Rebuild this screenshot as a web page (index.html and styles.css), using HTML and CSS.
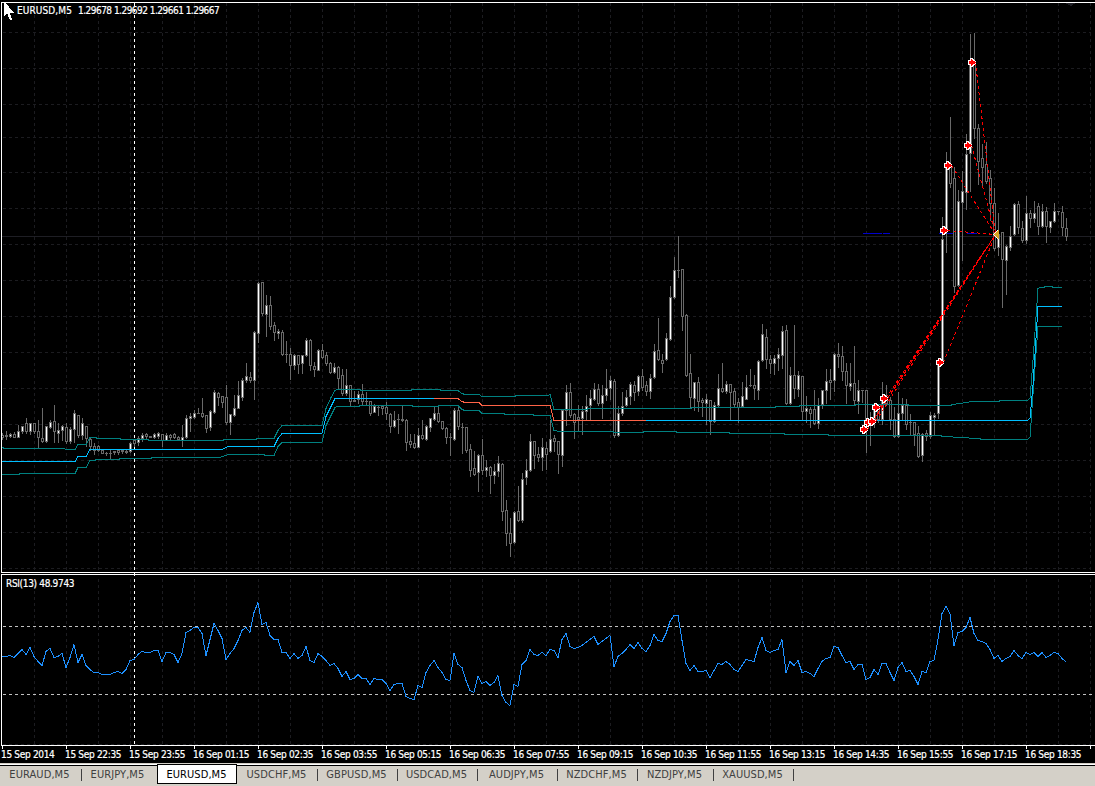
FILE: index.html
```html
<!DOCTYPE HTML>
<html>
	<head>
		<title>EURUSD,M5</title>
		<meta charset="utf-8">
		<link rel="stylesheet" href="styles.css">
	</head>

	<body>
		<div id="terminal">
			<div class="pane price">
				<svg id="price_chart" width="1095" height="573" viewBox="0 0 1095 573"></svg>
				<div class="pane_title price_title"><span class="symbol">EURUSD,M5</span><span>1.29678 1.29692 1.29661 1.29667</span></div>
				<svg class="cursor" width="12" height="20" viewBox="0 0 12 20"><path d="M0 0V15L3 12L6 19H8V18L6 12H10Z" fill="#fff" /></svg>
			</div>
			<div class="pane rsi">
				<svg id="rsi_chart" width="1095" height="176" viewBox="0 573 1095 176"></svg>
				<div class="pane_title rsi_title">RSI(13) 48.9743</div>
			</div>
			<div id="time_axis"></div>
			<div id="tabs">
				<a class="tab first">EURAUD,M5</a>
				<a class="tab before_active">EURJPY,M5</a>
				<a class="tab active">EURUSD,M5</a>
				<a class="tab">USDCHF,M5</a>
				<a class="tab">GBPUSD,M5</a>
				<a class="tab">USDCAD,M5</a>
				<a class="tab">AUDJPY,M5</a>
				<a class="tab">NZDCHF,M5</a>
				<a class="tab narrow">NZDJPY,M5</a>
				<a class="tab">XAUUSD,M5</a>
			</div>
		</div>
		<script src="chart.js"></script>
	</body>
</html>
```

FILE: styles.css
```css
html, body {
	margin: 0px;
	padding: 0px;
	width: 100%;
	height: 100%;
	overflow: hidden;
	background-color: #000;
}

#terminal {
	display: flex;
	flex-direction: column;
	height: 786px;
	font-family: "DejaVu Sans Condensed", "DejaVu Sans", sans-serif;
	font-size: 10px;
	color: #FFF;
}

.pane {
	position: relative;
	flex: none;
}

.price {
	height: 573px;
}

.rsi {
	height: 176px;
}

.pane svg {
	display: block;
	shape-rendering: crispEdges;
}

.pane_title {
	position: absolute;
	line-height: 14px;
	white-space: nowrap;
	-webkit-text-stroke: 0.2px #FFF;
}

.price_title {
	display: flex;
	gap: 6px;
	top: 4px;
	left: 17px;
	letter-spacing: -0.52px;
}

.symbol {
	letter-spacing: 0.1px;
}

.rsi_title {
	top: 4px;
	left: 6px;
	letter-spacing: -0.33px;
}

.pane .cursor {
	position: absolute;
	top: 1px;
	left: 4px;
}

#time_axis {
	display: flex;
	flex: none;
	height: 14px;
	padding-left: 1px;
	overflow: hidden;
	letter-spacing: -0.32px;
	-webkit-text-stroke: 0.2px #FFF;
}

#time_axis span {
	flex: none;
	width: 64px;
	line-height: 12px;
	white-space: nowrap;
}

#tabs {
	display: flex;
	flex: 1;
	border-top: 1px solid #D4D0C8;
	background-color: #D4D0C8;
	box-shadow: inset 0 1px 0 #FFF, inset 0 2px 0 #000;
	color: #404040;
	font-size: 11px;
}

.tab {
	position: relative;
	box-sizing: border-box;
	width: 80px;
	height: 20px;
	padding-top: 3px;
	padding-right: 3px;
	line-height: 16px;
	letter-spacing: 0.08px;
	text-align: center;
}

.tab::after {
	content: "";
	position: absolute;
	top: 5px;
	right: 0;
	width: 1px;
	height: 12px;
	background-color: #404040;
}

.tab.first {
	width: 82px;
}

.tab.before_active {
	width: 75px;
	padding-right: 4px;
}

.tab.narrow {
	width: 76px;
}

.tab.active {
	width: 80px;
	margin-right: 1px;
	padding-top: 2px;
	padding-right: 1px;
	border: 1px solid #000;
	background-color: #FFF;
	color: #000;
}

.tab.before_active::after, .tab.active::after {
	display: none;
}
```

FILE: chart.js
```js
var NS = "http://www.w3.org/2000/svg";
var STEP = 4;
var FIRST = 2;

//high, body top, body bottom, low, 1 = bullish
var candles = [
	[433,435,437,439,0],[431,435,436,439,0],[433,434,436,437,1],[432,434,437,437,0],[425,431,437,437,1],
	[426,426,431,433,1],[418,423,431,433,0],[423,423,431,434,1],[423,423,431,433,0],[420,431,437,448,0],
	[408,438,441,442,0],[426,426,441,442,1],[420,422,427,428,1],[405,421,431,442,0],[423,430,433,442,1],
	[425,426,430,440,1],[423,427,441,443,0],[427,429,441,443,1],[410,413,429,442,1],[415,415,435,437,0],
	[418,423,435,439,1],[426,426,438,446,0],[438,439,446,450,0],[443,446,450,454,0],[445,446,450,451,0],
	[449,450,453,453,0],[452,453,453,455,0],[450,453,453,459,0],[451,451,452,454,0],[450,450,452,454,0],
	[450,450,451,453,0],[450,451,452,453,0],[442,443,451,452,1],[439,440,443,446,0],[436,438,442,445,1],
	[433,435,438,441,1],[433,434,436,438,0],[436,436,437,437,0],[433,434,437,438,1],[432,433,436,438,1],
	[434,434,440,446,0],[433,435,440,440,1],[434,435,437,439,0],[433,434,437,438,0],[436,437,439,440,0],
	[425,437,440,446,1],[415,418,437,438,1],[413,416,418,431,1],[410,413,417,418,1],[408,413,413,413,0],
	[398,413,416,417,0],[415,415,428,432,0],[410,411,427,430,1],[390,392,412,413,1],[392,393,397,405,0],
	[396,396,402,407,0],[385,397,422,424,0],[414,414,422,434,1],[395,408,415,416,1],[381,395,408,408,1],
	[378,380,397,400,1],[363,376,380,382,1],[372,377,380,382,0],[331,332,380,399,1],[282,283,333,342,1],
	[282,282,313,315,0],[295,305,314,336,1],[296,305,326,329,0],[322,325,332,340,0],[329,331,333,338,1],
	[330,332,354,355,0],[341,354,354,362,0],[348,354,365,379,0],[354,355,365,369,1],[355,355,364,373,0],
	[355,355,363,373,1],[338,340,355,356,1],[339,340,365,370,0],[362,366,369,376,0],[349,350,370,370,1],
	[344,350,357,358,0],[352,355,363,365,0],[362,363,372,373,0],[363,367,372,373,1],[366,367,378,389,0],
	[369,375,393,395,0],[369,385,393,395,1],[385,385,401,405,0],[391,400,401,401,0],[391,394,399,403,1],
	[384,394,401,404,0],[392,401,401,405,0],[401,401,413,415,0],[404,406,412,412,1],[406,407,407,415,0],
	[405,406,408,414,0],[402,407,413,419,0],[413,414,426,432,0],[411,420,426,427,1],[414,419,419,433,0],
	[405,419,420,421,0],[419,420,442,450,0],[434,441,444,447,0],[434,443,447,448,0],[428,435,447,447,1],
	[420,435,438,439,0],[425,426,439,440,1],[418,418,427,431,1],[406,413,419,420,1],[405,413,421,422,0],
	[421,421,428,429,0],[427,428,437,443,0],[433,437,437,455,0],[408,410,439,440,1],[406,410,426,429,0],
	[423,427,427,453,0],[427,427,450,452,0],[444,449,470,476,0],[451,468,474,475,0],[454,455,472,491,1],
	[439,455,470,474,0],[460,467,470,476,1],[466,467,475,493,0],[464,471,475,483,1],[456,463,471,476,1],
	[463,464,511,520,0],[500,510,533,545,0],[518,533,543,556,0],[511,512,542,543,1],[486,511,520,521,0],
	[473,479,520,522,1],[459,470,477,484,1],[434,441,470,471,1],[441,441,455,468,0],[447,454,457,461,0],
	[438,447,457,470,1],[442,448,454,469,0],[420,439,451,452,1],[435,438,441,451,0],[441,441,454,473,0],
	[409,410,455,466,1],[385,392,410,425,1],[383,392,415,417,0],[413,414,422,438,0],[405,417,419,430,0],
	[406,411,418,434,1],[395,406,411,419,1],[390,398,405,419,1],[383,389,399,400,1],[384,389,403,405,0],
	[385,395,403,418,1],[369,388,395,400,1],[376,380,388,399,1],[379,381,435,437,0],[406,413,435,436,1],
	[392,406,413,415,1],[390,397,405,406,1],[382,384,396,404,1],[381,385,392,400,0],[375,376,391,395,1],
	[369,376,387,390,0],[381,385,391,395,0],[374,378,391,398,1],[344,351,377,378,1],[318,350,359,360,0],
	[354,360,363,372,0],[333,338,359,360,1],[286,297,339,340,1],[257,270,297,298,1],[236,270,270,277,0],
	[269,269,316,330,0],[314,315,375,376,0],[354,373,397,407,0],[382,382,398,410,1],[377,382,401,411,0],
	[398,400,402,416,0],[394,399,403,424,1],[400,400,421,434,0],[402,405,421,422,1],[374,388,405,406,1],
	[363,388,391,392,0],[381,384,391,393,1],[384,384,392,419,0],[388,391,404,407,0],[398,402,407,422,0],
	[382,396,406,407,1],[375,387,399,399,1],[369,385,385,386,0],[375,385,388,399,0],[360,361,390,399,1],
	[324,334,360,361,1],[329,337,359,368,0],[355,359,363,373,0],[355,358,363,374,1],[348,354,358,370,1],
	[326,331,355,368,1],[325,330,403,404,0],[367,375,403,404,1],[325,375,388,398,0],[371,375,389,396,1],
	[376,376,411,420,0],[396,408,411,422,1],[407,409,413,427,0],[390,409,423,424,0],[398,405,423,428,1],
	[390,390,404,408,1],[369,381,390,403,1],[369,380,382,399,0],[353,354,380,391,1],[343,354,356,367,0],
	[346,356,371,380,0],[363,371,385,403,0],[363,383,386,390,1],[346,383,400,405,0],[380,390,401,413,1],
	[390,390,390,402,0],[390,390,422,452,0],[412,419,423,445,1],[403,408,422,427,1],[404,407,419,422,0],
	[382,398,419,424,1],[385,398,403,405,0],[397,400,419,429,0],[407,419,436,437,0],[392,413,436,437,1],
	[398,405,413,419,1],[399,405,424,429,0],[414,422,422,435,0],[422,422,434,445,0],[426,433,456,457,0],
	[433,434,455,461,1],[430,433,436,440,0],[412,415,436,438,1],[413,415,417,435,1],[362,364,413,418,1],
	[217,239,361,363,1],[152,165,229,252,1],[117,165,183,187,0],[167,178,286,292,0],[190,201,285,286,1],
	[171,191,202,260,1],[134,154,192,209,1],[34,62,153,191,1],[33,63,128,138,0],[124,128,161,184,0],
	[144,158,167,185,0],[142,164,181,183,0],[170,178,203,220,0],[188,203,248,250,0],[213,234,247,255,1],
	[232,232,259,307,0],[245,246,260,294,1],[226,236,247,250,1],[203,204,234,235,1],[201,204,227,233,0],
	[221,228,240,242,0],[196,213,240,243,1],[210,213,218,227,0],[201,213,218,222,1],[203,206,226,234,0],
	[204,211,226,227,1],[207,211,226,242,0],[221,221,227,232,1],[203,211,221,222,1],[211,211,211,214,0],
	[206,212,227,235,0],[218,228,236,240,0]
];

var rsi = [
	656,656,655,657,653,649,654,647,656,661,665,651,648,657,656,653,667,657,644,662,654,665,669,672,672,674,
	674,674,672,671,673,669,660,659,654,651,652,652,650,650,661,652,652,654,662,653,632,630,627,627,633,655,
	639,623,630,638,659,653,648,640,630,627,632,612,602,624,622,635,639,639,652,652,658,653,658,655,646,660,
	662,653,656,660,665,663,668,676,671,679,678,674,678,678,684,678,679,679,683,690,684,683,683,696,698,699,
	685,687,672,665,660,667,672,679,680,653,664,667,680,690,692,676,683,681,685,682,675,695,702,705,684,686,
	664,660,649,654,655,652,655,649,650,657,639,633,646,648,647,645,642,639,636,644,641,638,635,666,656,653,
	649,644,648,642,648,651,645,634,640,641,633,621,615,615,640,663,670,665,671,671,670,677,670,663,664,661,
	664,669,671,665,659,660,661,647,637,650,652,650,649,639,672,661,665,660,672,671,673,676,668,661,658,657,
	646,647,655,662,661,669,664,664,679,677,669,674,663,663,672,680,667,662,671,670,676,684,671,672,661,660,
	639,613,606,613,645,632,631,627,617,633,640,641,643,649,658,655,661,658,656,650,655,658,652,654,652,656,
	652,657,655,652,653,658,661
];

//Indicator bands
var upper = "2,447 5,448 64,448 66,449 75,449 78,444 86,444 90,437 96,437 97,438 120,438 121,439 148,439 149,440 221,440 226,439 256,439 257,438 274,438 278,430 282,425 322,425 326,408 331,397 335,390 337,389 360,389 361,390 411,390 412,389 440,389 441,390 458,390 462,393 465,394 479,394 482,396 515,396 516,395 548,395 550,394 554,409 587,409 588,408 691,408 692,407 775,407 776,406 799,406 800,405 855,405 856,404 908,404 909,405 950,405 953,404 960,403 972,401 999,401 1000,400 1027,400 1030,398 1033,360 1038,288 1040,287 1044,287 1045,286 1052,286 1053,287 1062,287";
var lower = "2,474 19,474 20,473 75,473 78,467 86,467 90,460 95,460 96,459 119,459 120,458 151,458 152,457 220,457 228,454 264,454 265,455 274,455 278,446 282,442 322,442 326,425 331,415 335,407 337,406 359,406 360,405 412,405 413,406 438,406 439,405 458,405 462,409 465,410 479,410 482,413 504,413 505,414 533,414 534,415 550,415 554,430 560,431 613,431 614,432 643,432 644,431 676,431 677,432 729,432 730,433 784,433 785,434 828,434 829,435 940,435 943,436 952,436 954,437 968,437 970,438 980,438 981,439 1027,439 1030,437 1033,394 1038,326 1062,326";
var middle = [
	["#00bfff", "2,461 75,461 78,456 86,456 90,449 222,449 228,446 274,446 278,438 282,433 322,433 326,416 331,406 335,398 434,398"],
	["#ff6347", "434,398 458,398 462,401 465,402 479,402 482,405 550,405 554,420 646,420"],
	["#00bfff", "646,420 1027,420 1030,418 1033,385 1038,306 1062,306"]
];

//Sell orders, all closed at the same point
var orders = [[863,429],[867,422],[871,421],[875,407],[883,398],[939,362],[943,230],[947,165],[967,145],[971,62]];
var close_point = [995, 234];

function add(parent, tag, attrs) {
	var el = document.createElementNS(NS, tag);
	for (var key in attrs) { el.setAttribute(key, attrs[key]); }
	parent.appendChild(el);
	return el;
}

function rect(parent, x, y, w, h, fill) {
	return add(parent, "rect", { x: x, y: y, width: w, height: h, fill: fill });
}

function line(parent, x1, y1, x2, y2, color, dash) {
	var attrs = { x1: x1, y1: y1, x2: x2, y2: y2, stroke: color };
	if (dash) { attrs["stroke-dasharray"] = dash; }
	return add(parent, "line", attrs);
}

function poly(parent, points, color) {
	return add(parent, "polyline", { points: points, stroke: color, fill: "none", transform: "translate(0 0.5)" });
}

function drawGrid(svg, top, bottom, rows) {
	for (var x = 34; x < 1095; x += 32) {
		line(svg, x + 0.5, top, x + 0.5, bottom, "#1c1c20", "3 3");
	}
	rows.forEach(function(y) {
		line(svg, 3, y + 0.5, 1091, y + 0.5, "#1c1c20", "3 3");
	});
}

function drawCandle(svg, x, c) {
	var gray = "#696969";
	rect(svg, x, c[0], 1, c[3] - c[0] + 1, gray);
	rect(svg, x - 1, c[1], 3, c[2] - c[1] + 1, gray);
	if (c[2] - c[1] > 1) {
		rect(svg, x, c[1] + 1, 1, c[2] - c[1] - 1, c[4] ? "#fff" : "#000");
	}
}

function drawPrice() {
	var svg = document.getElementById("price_chart");
	drawGrid(svg, 3, 572, [32,68,104,137,172,208,244,280,316,352,388,424,460,496,532,568]);
	line(svg, 134.5, 3, 134.5, 572, "#fff", "3 3");
	rect(svg, 2, 236, 1093, 1, "#1e1e24");
	rect(svg, 863, 233, 19, 1, "#0000cd");
	rect(svg, 883, 233, 7, 1, "#0000cd");
	rect(svg, 939, 233, 15, 1, "#0000cd");
	rect(svg, 967, 233, 10, 1, "#0000cd");

	candles.forEach(function(c, i) { drawCandle(svg, FIRST + i * STEP, c); });

	poly(svg, upper, "#008080");
	poly(svg, lower, "#008080");
	middle.forEach(function(m) { poly(svg, m[1], m[0]); });

	orders.forEach(function(o) {
		line(svg, o[0] + 4.5, o[1] + 0.5, close_point[0] + 0.5, close_point[1] + 0.5, "#f00", "3 3");
	});
	orders.forEach(function(o) {
		var g = add(svg, "g", { transform: "translate(" + o[0] + " " + o[1] + ")" });
		add(g, "path", { d: "M-3 -2H-1V-4H1L4.5 -0.5V1.5L1 5H-1V3H-3Z", fill: "#fff" });
		add(g, "path", { d: "M-2 -1H0V-3L4.5 0V1L0 4V2H-2Z", fill: "#f00" });
	});
	add(svg, "path", { d: "M993 234L998 229V240L993 235Z", fill: "#fff" });
	add(svg, "path", { d: "M994 234L999 230V239L994 235Z", fill: "#daa520" });

	//frame
	rect(svg, 1, 2, 1094, 1, "#fff");
	rect(svg, 1, 2, 1, 571, "#fff");
	rect(svg, 1, 572, 1094, 1, "#fff");
	add(svg, "path", { d: "M1065 3H1076L1071 6Z", fill: "#1e1e24" });
}

function drawRsi() {
	var svg = document.getElementById("rsi_chart");
	drawGrid(svg, 579, 745, [744]);
	line(svg, 134.5, 573, 134.5, 745, "#fff", "3 3");
	line(svg, 3, 626.5, 1092, 626.5, "#c0c0c0", "3 3");
	line(svg, 3, 694.5, 1092, 694.5, "#c0c0c0", "3 3");
	poly(svg, rsi.map(function(y, i) { return (FIRST + i * STEP) + "," + y; }).join(" "), "#1e90ff");
	rect(svg, 1, 574, 1094, 1, "#fff");
	rect(svg, 1, 574, 1, 171, "#fff");
	rect(svg, 1, 745, 1094, 1, "#fff");
	for (var x = 2; x < 1095; x += 64) { rect(svg, x, 745, 1, 4, "#fff"); }
}

//One label every 80 minutes
function drawTimes() {
	var axis = document.getElementById("time_axis");
	for (var i = 0; i < 17; i++) {
		var span = document.createElement("span");
		var minutes = 21 * 60 + 15 + i * 80;
		var day = 15 + Math.floor(minutes / 1440);
		var h = ("0" + Math.floor(minutes / 60) % 24).slice(-2);
		var m = ("0" + minutes % 60).slice(-2);
		span.textContent = i == 0 ? "15 Sep 2014" : day + " Sep " + h + ":" + m;
		axis.appendChild(span);
	}
}

drawPrice();
drawRsi();
drawTimes();
```
